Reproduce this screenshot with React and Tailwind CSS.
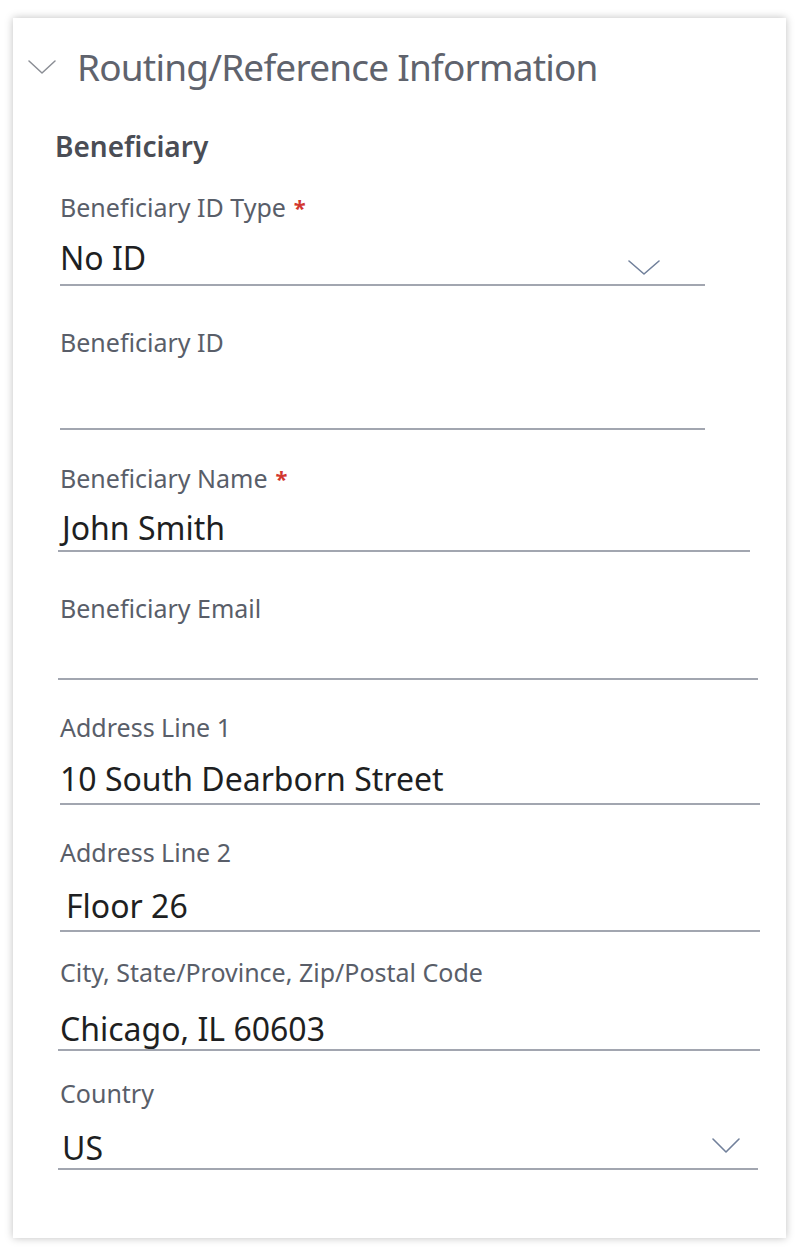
function Chevron({ className, color = '#71809b', w = 28, h = 14, sw = 1.6 }) {
  return (
    <svg className={className} width={w} height={h} viewBox={`0 0 ${w} ${h}`} fill="none">
      <polyline points={`1,1 ${w / 2},${h - 1} ${w - 1},1`} stroke={color} strokeWidth={sw} strokeLinecap="round" strokeLinejoin="round" />
    </svg>
  )
}

// per-field spacing read off the reference
const fields = [
  { label: 'Beneficiary ID Type', required: true, value: 'No ID', mt: 'mt-[29px]', box: 'h-[64px] w-[645px]', pt: 'mt-[16px]', select: { w: 32, h: 15, cls: 'mr-[45px] mb-[9px]' } },
  { label: 'Beneficiary ID', value: '', mt: 'mt-[41px]', box: 'h-[73px] w-[645px]', pt: 'mt-[16px]' },
  { label: 'Beneficiary Name', required: true, value: 'John Smith', mt: 'mt-[33px]', box: 'h-[59px] w-[692px] -ml-[2px]', pt: 'mt-[15px] ml-[4px]' },
  { label: 'Beneficiary Email', value: '', mt: 'mt-[41px]', box: 'h-[57px] w-[700px] -ml-[2px]', pt: 'mt-[15px]' },
  { label: 'Address Line 1', value: '10 South Dearborn Street', mt: 'mt-[32px]', box: 'h-[63px] w-[700px]', pt: 'mt-[17px]' },
  { label: 'Address Line 2', value: 'Floor 26', mt: 'mt-[32px]', box: 'h-[65px] w-[700px]', pt: 'mt-[19px] ml-[6px]' },
  { label: 'City, State/Province, Zip/Postal Code', value: 'Chicago, IL 60603', mt: 'mt-[25px]', box: 'h-[64px] w-[702px] -ml-[2px]', pt: 'mt-[22px] ml-[2px]' },
  { label: 'Country', value: 'US', mt: 'mt-[27px]', box: 'h-[62px] w-[700px] -ml-[2px]', pt: 'mt-[20px] ml-[4px]', select: { w: 28, h: 15, cls: 'mr-[18px] mb-[15px]' } },
]

function Field({ f }) {
  return (
    <div className={f.mt}>
      <div className="text-[25px] leading-[30px] text-[#595e69]">
        {f.label}
        {f.required && <span className="ml-[8px] text-[#d2372f] font-bold text-[22px] align-top">*</span>}
      </div>
      <div className={`${f.box} flex justify-between border-b-2 border-[#a2a6b0]`}>
        <span className={`${f.pt} text-[32px] leading-[40px] text-[#1e1f22] whitespace-nowrap`}>{f.value}</span>
        {f.select && <Chevron className={`${f.select.cls} self-end`} w={f.select.w} h={f.select.h} />}
      </div>
    </div>
  )
}

export default function App() {
  return (
    <div className="min-h-screen bg-white pt-[18px] pl-[13px]" style={{ fontFamily: '"Noto Sans", "Open Sans", sans-serif' }}>
      <div className="w-[773px] h-[1220px] bg-white shadow-[0_0_8px_rgba(0,0,0,0.25)]">
        <div className="flex items-center pt-[25px] pl-[15px]">
          <Chevron color="#8b8e95" w={28} h={14} sw={1.5} />
          <h2 className="ml-[21px] text-[37px] leading-[48px] text-[#5f636d] tracking-[-0.8px]">Routing/Reference Information</h2>
        </div>
        <div className="pl-[47px]">
          <div className="mt-[38px] -ml-[5px] text-[28px] leading-[34px] font-semibold text-[#4a4d55]">Beneficiary</div>
          {fields.map((f) => (
            <Field key={f.label} f={f} />
          ))}
        </div>
      </div>
    </div>
  )
}
